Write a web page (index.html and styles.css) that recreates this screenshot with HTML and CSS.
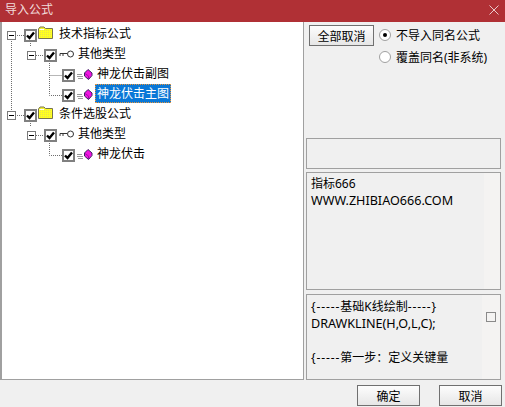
FILE: index.html
```html
<!DOCTYPE html>
<html lang="zh">
<head>
<meta charset="utf-8">
<title>导入公式</title>
<link rel="stylesheet" href="styles.css">
</head>
<body>
<div class="window">
  <header class="titlebar">
    <span class="title">导入公式</span>
    <svg class="close" width="10" height="10" viewBox="0 0 10 10"><path d="M0.5 0.5L9.5 9.5M9.5 0.5L0.5 9.5" stroke="#e9c9ca" fill="none"/></svg>
  </header>
  <div class="content">
    <section class="tree">
      <svg class="connectors" width="90" height="170" viewBox="0 0 90 170">
        <g stroke="#6e6e6e" stroke-dasharray="1 1" fill="none">
          <path d="M11.5 17V94"/>
          <path d="M17 13.5H24"/>
          <path d="M30.5 21V25"/>
          <path d="M36 33.5H43"/>
          <path d="M49.5 41V73.5H62"/>
          <path d="M49.5 53.5H62"/>
          <path d="M17 93.5H24"/>
          <path d="M30.5 101V105"/>
          <path d="M36 113.5H43"/>
          <path d="M49.5 121V133.5H62"/>
        </g>
      </svg>
      <svg class="defs" width="0" height="0">
        <defs>
          <pattern id="dither" width="2" height="2" patternUnits="userSpaceOnUse">
            <rect width="2" height="2" fill="#ffff20"/>
            <rect width="1" height="1" fill="#e8e24e"/>
          </pattern>
        </defs>
      </svg>
      <div class="row depth-0">
        <span class="expander"></span><span class="check"><svg viewBox="0 0 9 9"><path d="M1 4.5L3.5 7L8 1.5" /></svg></span>
        <svg class="folder" width="16" height="14" viewBox="0 0 16 14"><path d="M0.5 12.5V3L2 1H6L7.5 2.5H14.5V12.5H0.5Z" fill="url(#dither)" stroke="#77734e"/><path d="M1.5 3.5H6" stroke="#fff"/></svg>
        <span class="label">技术指标公式</span>
      </div>
      <div class="row depth-1">
        <span class="expander"></span><span class="check"><svg viewBox="0 0 9 9"><path d="M1 4.5L3.5 7L8 1.5" /></svg></span>
        <svg class="key" width="16" height="8" viewBox="0 0 16 8"><circle cx="11.5" cy="4" r="3" fill="#fff" stroke="#333"/><path d="M8 3.5H1V6M4 3.5V6" fill="none" stroke="#333"/></svg>
        <span class="label">其他类型</span>
      </div>
      <div class="row depth-2">
        <span class="check"><svg viewBox="0 0 9 9"><path d="M1 4.5L3.5 7L8 1.5" /></svg></span>
        <svg class="gem" width="16" height="12" viewBox="0 0 16 12"><path d="M0 5.5H5M0 7.5H6M1 9.5H6" stroke="#9a9a9a"/><path d="M11 0.5L15 4V6.5L11.5 10.5L7.5 7V4Z" fill="#f014e0" stroke="#3a2060"/><path d="M8 4.5L11.5 7V10" fill="none" stroke="#a010a8"/></svg>
        <span class="label">神龙伏击副图</span>
      </div>
      <div class="row depth-2">
        <span class="check"><svg viewBox="0 0 9 9"><path d="M1 4.5L3.5 7L8 1.5" /></svg></span>
        <svg class="gem" width="16" height="12" viewBox="0 0 16 12"><path d="M0 5.5H5M0 7.5H6M1 9.5H6" stroke="#9a9a9a"/><path d="M11 0.5L15 4V6.5L11.5 10.5L7.5 7V4Z" fill="#f014e0" stroke="#3a2060"/><path d="M8 4.5L11.5 7V10" fill="none" stroke="#a010a8"/></svg>
        <span class="label selected">神龙伏击主图</span>
      </div>
      <div class="row depth-0">
        <span class="expander"></span><span class="check"><svg viewBox="0 0 9 9"><path d="M1 4.5L3.5 7L8 1.5" /></svg></span>
        <svg class="folder" width="16" height="14" viewBox="0 0 16 14"><path d="M0.5 12.5V3L2 1H6L7.5 2.5H14.5V12.5H0.5Z" fill="url(#dither)" stroke="#77734e"/><path d="M1.5 3.5H6" stroke="#fff"/></svg>
        <span class="label">条件选股公式</span>
      </div>
      <div class="row depth-1">
        <span class="expander"></span><span class="check"><svg viewBox="0 0 9 9"><path d="M1 4.5L3.5 7L8 1.5" /></svg></span>
        <svg class="key" width="16" height="8" viewBox="0 0 16 8"><circle cx="11.5" cy="4" r="3" fill="#fff" stroke="#333"/><path d="M8 3.5H1V6M4 3.5V6" fill="none" stroke="#333"/></svg>
        <span class="label">其他类型</span>
      </div>
      <div class="row depth-2">
        <span class="check"><svg viewBox="0 0 9 9"><path d="M1 4.5L3.5 7L8 1.5" /></svg></span>
        <svg class="gem" width="16" height="12" viewBox="0 0 16 12"><path d="M0 5.5H5M0 7.5H6M1 9.5H6" stroke="#9a9a9a"/><path d="M11 0.5L15 4V6.5L11.5 10.5L7.5 7V4Z" fill="#f014e0" stroke="#3a2060"/><path d="M8 4.5L11.5 7V10" fill="none" stroke="#a010a8"/></svg>
        <span class="label">神龙伏击</span>
      </div>
    </section>
    <aside class="side">
      <div class="options">
        <button class="btn btn-all">全部取消</button>
        <div class="radios">
          <label class="radio"><span class="dot on"></span>不导入同名公式</label>
          <label class="radio"><span class="dot"></span>覆盖同名(非系统)</label>
        </div>
      </div>
      <div class="box box-empty"></div>
      <div class="box box-info">指标666<br><span class="latin">WWW.ZHIBIAO666.COM</span></div>
      <div class="box box-code">
        <p><span class="dashes">{-----</span>基础K线绘制<span class="dashes">-----}</span></p>
        <p><span class="latin">DRAWKLINE(H,O,L,C);</span></p>
        <p>&nbsp;</p>
        <p><span class="dashes">{-----</span>第一步：定义关键量</p>
        <span class="mini-check"></span>
      </div>
    </aside>
  </div>
  <footer class="footer">
    <button class="btn btn-foot">确定</button>
    <button class="btn btn-foot">取消</button>
  </footer>
</div>
</body>
</html>
```

FILE: styles.css
```css
* { box-sizing: border-box; }
html, body { margin: 0; padding: 0; }
body {
  width: 505px;
  height: 407px;
  overflow: hidden;
  background: #f0f0f0;
  font-family: "Noto Sans", "Noto Sans CJK SC", sans-serif;
  font-size: 12px;
  color: #000;
}
.window { display: flex; flex-direction: column; width: 505px; height: 407px; }
.titlebar {
  flex: 0 0 22px;
  display: flex;
  align-items: center;
  justify-content: space-between;
  padding: 0 6px 3px 5px;
  background: #b03035;
  color: #f0dcdc;
  line-height: 16px;
}
.content { flex: 0 0 358px; display: flex; }
.tree {
  position: relative;
  flex: 0 0 304px;
  padding-top: 4px;
  background: #fff;
  border-left: 2px solid #a0a0a0;
  border-right: 1px solid #a0a0a0;
  border-bottom: 1px solid #a0a0a0;
}
.connectors { position: absolute; left: -2px; top: 0; }
.defs { position: absolute; }
.row { position: relative; display: flex; align-items: flex-start; height: 20px; }
.depth-0 { padding-left: 5px; }
.depth-1 { padding-left: 25px; }
.depth-2 { padding-left: 60px; }
.expander {
  position: relative;
  flex: none;
  width: 9px;
  height: 9px;
  margin-top: 5px;
  margin-right: 8px;
  background: #fff;
  border: 1px solid #7a7a7a;
}
.expander::after {
  content: "";
  position: absolute;
  left: 1px;
  top: 3px;
  width: 5px;
  height: 1px;
  background: #000;
}
.check {
  flex: none;
  display: flex;
  align-items: center;
  justify-content: center;
  width: 13px;
  height: 13px;
  margin-top: 3px;
  background: #fff;
  border: 2px solid #808080;
}
.check svg { width: 9px; height: 9px; fill: none; stroke: #000; stroke-width: 2.4; }
.folder { flex: none; margin: 0 5px 0 1px; }
.key { flex: none; margin: 4px 3px 0 2px; }
.gem { flex: none; margin: 3px 4px 0 2px; }
.label { line-height: 16px; white-space: nowrap; }
.selected {
  margin: -2px 0 0 -2px;
  padding: 2px 2px 0;
  height: 19px;
  background: #0a78d7;
  color: #fff;
  outline: 1px dotted #e8963c;
  outline-offset: -1px;
}
.side { flex: 1; display: flex; flex-direction: column; padding: 3px 4px 0 2px; }
.options { flex: 0 0 113px; display: flex; align-items: flex-start; }
.btn {
  padding: 0;
  font: inherit;
  color: #000;
  background: linear-gradient(#fdfdfd, #e6e6e6);
  border: 1px solid #707070;
  border-radius: 0;
}
.btn-all { flex: 0 0 65px; height: 21px; margin-left: 3px; }
.radios { display: flex; flex-direction: column; margin: 1px 0 0 5px; gap: 4px; }
.radio { display: flex; align-items: center; gap: 5px; height: 18px; white-space: nowrap; }
.dot {
  position: relative;
  flex: none;
  width: 12px;
  height: 12px;
  border-radius: 50%;
  background: #fff;
  border: 1px solid #a0a0a0;
}
.dot.on::after {
  content: "";
  position: absolute;
  left: 3px;
  top: 3px;
  width: 4px;
  height: 4px;
  border-radius: 50%;
  background: #000;
}
.latin { font-size: 12.6px; }
.dashes { letter-spacing: 0.9px; }
.box { border: 1px solid #a0a0a0; background: #f0f0f0; }
.box-empty { flex: 0 0 31px; margin-bottom: 3px; }
.box-info { flex: 0 0 118px; margin-bottom: 4px; padding: 2px 4px; line-height: 17px; background: linear-gradient(90deg, #f0f0f0 177px, #f4f3f2 177px); }
.box-code { position: relative; flex: 0 0 86px; padding: 3px 4px; line-height: 17px; background: linear-gradient(90deg, #f0f0f0 175px, #f4f3f2 175px); }
.box-code p { margin: 0; }
.mini-check {
  position: absolute;
  left: 179px;
  top: 17px;
  width: 10px;
  height: 10px;
  border: 1px solid #8a8a8a;
  background: #f4f3f2;
}
.footer { flex: 1; display: flex; justify-content: flex-end; gap: 19px; padding: 5px 3px 0 0; }
.btn-foot { flex: 0 0 63px; height: 21px; }
```
